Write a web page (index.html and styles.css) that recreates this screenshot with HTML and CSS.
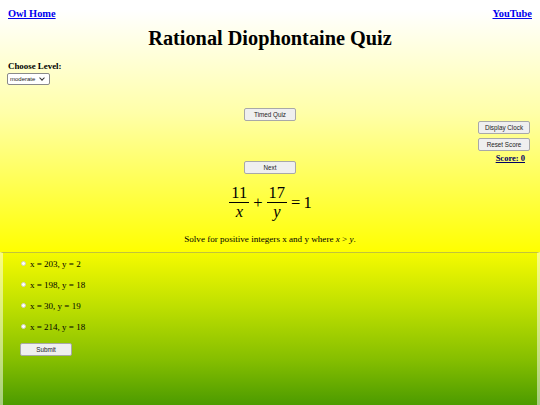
FILE: index.html
```html
<!DOCTYPE html>
<html>
<head>
<meta charset="utf-8">
<title>Rational Diophontaine Quiz</title>
<link rel="stylesheet" href="styles.css">
</head>
<body>
<div class="top">
  <div class="links">
    <a href="#">Owl Home</a>
    <a href="#">YouTube</a>
  </div>
  <h1 class="title">Rational Diophontaine Quiz</h1>
  <div class="level">
    <div class="level-label">Choose Level:</div>
    <span class="select-wrap">
      <select class="level-select">
        <option>easy</option>
        <option selected>moderate</option>
        <option>hard</option>
      </select>
    </span>
  </div>
  <div class="controls">
    <div class="side"></div>
    <div class="center-col">
      <button class="btn">Timed Quiz</button>
      <button class="btn">Next</button>
    </div>
    <div class="side right-col">
      <button class="btn">Display Clock</button>
      <button class="btn">Reset Score</button>
      <a href="#" class="score">Score: 0</a>
    </div>
  </div>
  <div class="equation">
    <span class="frac"><span class="num">11</span><span class="den"><i>x</i></span></span>
    <span class="op">+</span>
    <span class="frac"><span class="num">17</span><span class="den"><i>y</i></span></span>
    <span class="op">=</span>
    <span class="one">1</span>
  </div>
  <p class="prompt">Solve for positive integers x and y where <i>x</i> &gt; <i>y</i>.</p>
</div>
<div class="answers">
  <label class="option"><input type="radio" name="ans"> x = 203, y = 2</label>
  <label class="option"><input type="radio" name="ans"> x = 198, y = 18</label>
  <label class="option"><input type="radio" name="ans"> x = 30, y = 19</label>
  <label class="option"><input type="radio" name="ans"> x = 214, y = 18</label>
  <button class="btn submit">Submit</button>
</div>
</body>
</html>
```
FILE: styles.css
```css
html, body {
  margin: 0;
  padding: 0;
}
body {
  font-family: "Liberation Serif", "Times New Roman", serif;
  font-size: 9px;
  color: #000;
  background: #f4f8e8;
  overflow: hidden;
}
.top {
  height: 252px;
  box-sizing: border-box;
  padding: 8px 8px 0;
  background: linear-gradient(#ffffff 4%, #ffffa8 45%, #ffff00 100%);
}
.links {
  display: flex;
  justify-content: space-between;
  line-height: 12px;
}
.links a {
  font-weight: bold;
  color: #0000ee;
  font-size: 10.4px;
}
.title {
  margin: 6px 0 0;
  text-align: center;
  font-size: 20.3px;
  line-height: 24px;
}
.level {
  margin-top: 11px;
}
.level-label {
  font-weight: bold;
  font-size: 8.9px;
  line-height: 11px;
}
.select-wrap {
  position: relative;
  display: inline-block;
  margin-top: 1px;
  margin-left: -1px;
}
.select-wrap::after {
  content: "";
  position: absolute;
  right: 6px;
  top: 3px;
  width: 3px;
  height: 3px;
  border-right: 1px solid #333;
  border-bottom: 1px solid #333;
  transform: rotate(45deg);
  pointer-events: none;
}
.level-select {
  -webkit-appearance: none;
  appearance: none;
  display: block;
  width: 43px;
  height: 12px;
  font-size: 6px;
  font-family: "Liberation Sans", Arial, sans-serif;
  color: #222;
  padding: 0 0 0 2px;
  border: 1px solid #8a8a8a;
  border-radius: 2px;
  background: #fff;
}
.controls {
  display: grid;
  grid-template-columns: 1fr auto 1fr;
  margin-top: 23px;
}
.center-col {
  display: flex;
  flex-direction: column;
  gap: 40px;
  align-items: center;
}
.right-col {
  display: flex;
  flex-direction: column;
  align-items: flex-end;
  padding-top: 13px;
  gap: 4px;
  margin-right: 2px;
}
.btn {
  width: 52px;
  height: 13px;
  padding: 0;
  font-family: "Liberation Sans", Arial, sans-serif;
  font-size: 6.3px;
  color: #222;
  background: #efefef;
  border: 1px solid #a8a8a8;
  border-radius: 2px;
}
.score {
  font-weight: bold;
  color: #000066;
  font-size: 8.5px;
  margin-right: 5px;
  margin-top: -2px;
  line-height: 10px;
}
.equation {
  display: flex;
  justify-content: center;
  align-items: center;
  gap: 1px;
  margin-top: 11px;
  font-family: "Liberation Serif", serif;
  font-size: 16.5px;
}
.frac {
  display: inline-flex;
  flex-direction: column;
  align-items: center;
  padding: 0 1px;
}
.num {
  line-height: 16px;
  border-bottom: 1px solid #000;
  padding: 0 2px 1px;
}
.den {
  line-height: 16px;
  padding-top: 1px;
}
.op {
  padding: 0 2px;
}
.prompt {
  margin: 14px 0 0;
  text-align: center;
  font-size: 9.1px;
}
.answers {
  box-sizing: border-box;
  height: 153px;
  border: 3px solid rgba(255, 255, 255, 0.5);
  border-top: 1px solid rgba(150, 150, 110, 0.55);
  border-bottom: 0;
  background: linear-gradient(#f6fb00 0%, #bfe000 35%, #86bf00 70%, #4c9b00 100%) border-box;
  padding: 0 0 0 17px;
  display: flex;
  flex-direction: column;
  align-items: flex-start;
}
.option {
  display: flex;
  align-items: center;
  height: 21px;
  font-size: 9px;
}
.option input {
  -webkit-appearance: none;
  appearance: none;
  width: 5px;
  height: 5px;
  margin: 0 4px 0 1px;
  border-radius: 50%;
  border: 1px solid #d0d0c0;
  background: #fff;
}
.submit {
  margin-top: 6px;
}
```
